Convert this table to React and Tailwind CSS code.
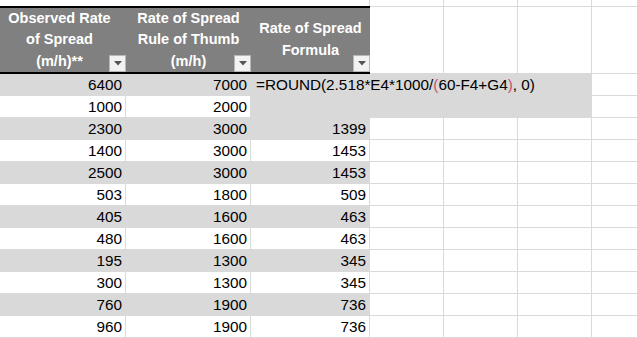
import React from "react";

const rows = [
  ["6400", "7000", null],
  ["1000", "2000", null],
  ["2300", "3000", "1399"],
  ["1400", "3000", "1453"],
  ["2500", "3000", "1453"],
  ["503", "1800", "509"],
  ["405", "1600", "463"],
  ["480", "1600", "463"],
  ["195", "1300", "345"],
  ["300", "1300", "345"],
  ["760", "1900", "736"],
  ["960", "1900", "736"],
];

const FilterButton = () => (
  <div className="absolute right-0 bottom-0 w-[17px] h-[17px] border border-[#b8b8b8] bg-[#f2f2f2] flex items-center justify-center">
    <svg width="8" height="5" viewBox="0 0 8 5">
      <polygon points="0,0 8,0 4,4.5" fill="#555555" />
    </svg>
  </div>
);

const HeaderCell = ({ lines, className = "" }) => (
  <div className="relative bg-[#808080] border-t-2 border-b-2 border-black flex items-center justify-center">
    <div className={`text-white font-bold text-[14.5px] leading-[21.5px] text-center ${className}`}>
      {lines.map((l, i) => (
        <div key={i} className="whitespace-nowrap">{l}</div>
      ))}
    </div>
    <FilterButton />
  </div>
);

const GridCell = ({ top }) => (
  <div className={`border-r border-b border-[#dadada] ${top ? "border-t" : ""}`} />
);

const DataCell = ({ value, gray }) => (
  <div
    className={`h-[22px] border-r border-b ${
      gray ? "bg-[#d9d9d9] border-[#d9d9d9]" : "bg-white border-[#dadada]"
    } text-right pr-[3px] leading-[21px]`}
  >
    {value}
  </div>
);

export default function App() {
  return (
    <div
      className="w-[637px] h-[338px] overflow-hidden bg-white text-black text-[15.3px]"
      style={{ fontFamily: '"Liberation Sans", Arial, sans-serif' }}
    >
      <div className="grid grid-cols-[126px_125px_119px_74px_74px_74px_1fr] grid-rows-[6px_68px_repeat(12,22px)]">
        {/* row above the table */}
        <div />
        <div />
        <div className="border-r border-[#dadada]" />
        <div className="border-r border-[#dadada]" />
        <div className="border-r border-[#dadada]" />
        <div className="border-r border-[#dadada]" />
        <div />

        {/* header */}
        <HeaderCell lines={["Observed Rate", "of Spread", "(m/h)**"]} className="pr-[7px]" />
        <HeaderCell lines={["Rate of Spread", "Rule of Thumb", "(m/h)"]} />
        <HeaderCell lines={["Rate of Spread", "Formula"]} className="-mt-[1px]" />
        <GridCell top />
        <GridCell top />
        <GridCell top />
        <div className="border-t border-b border-[#dadada]" />

        {rows.map((r, i) => {
          const gray = i % 2 === 0;
          return (
            <React.Fragment key={i}>
              <DataCell value={r[0]} gray={gray} />
              <DataCell value={r[1]} gray={gray} />
              {i === 0 && (
                <div className="col-span-4 row-span-2 bg-[#d9d9d9] border-r border-b border-[#dadada] pl-[5px] leading-[21px] whitespace-nowrap">
                  =ROUND(2.518*E4*1000/<span className="text-[#c4536a]">(</span>60-F4+G4
                  <span className="text-[#c4536a]">)</span>, 0)
                </div>
              )}
              {i > 1 && <DataCell value={r[2]} gray={gray} />}
              {i > 1 && (
                <>
                  <GridCell />
                  <GridCell />
                  <GridCell />
                </>
              )}
              <div className="border-b border-[#dadada]" />
            </React.Fragment>
          );
        })}
      </div>
    </div>
  );
}
